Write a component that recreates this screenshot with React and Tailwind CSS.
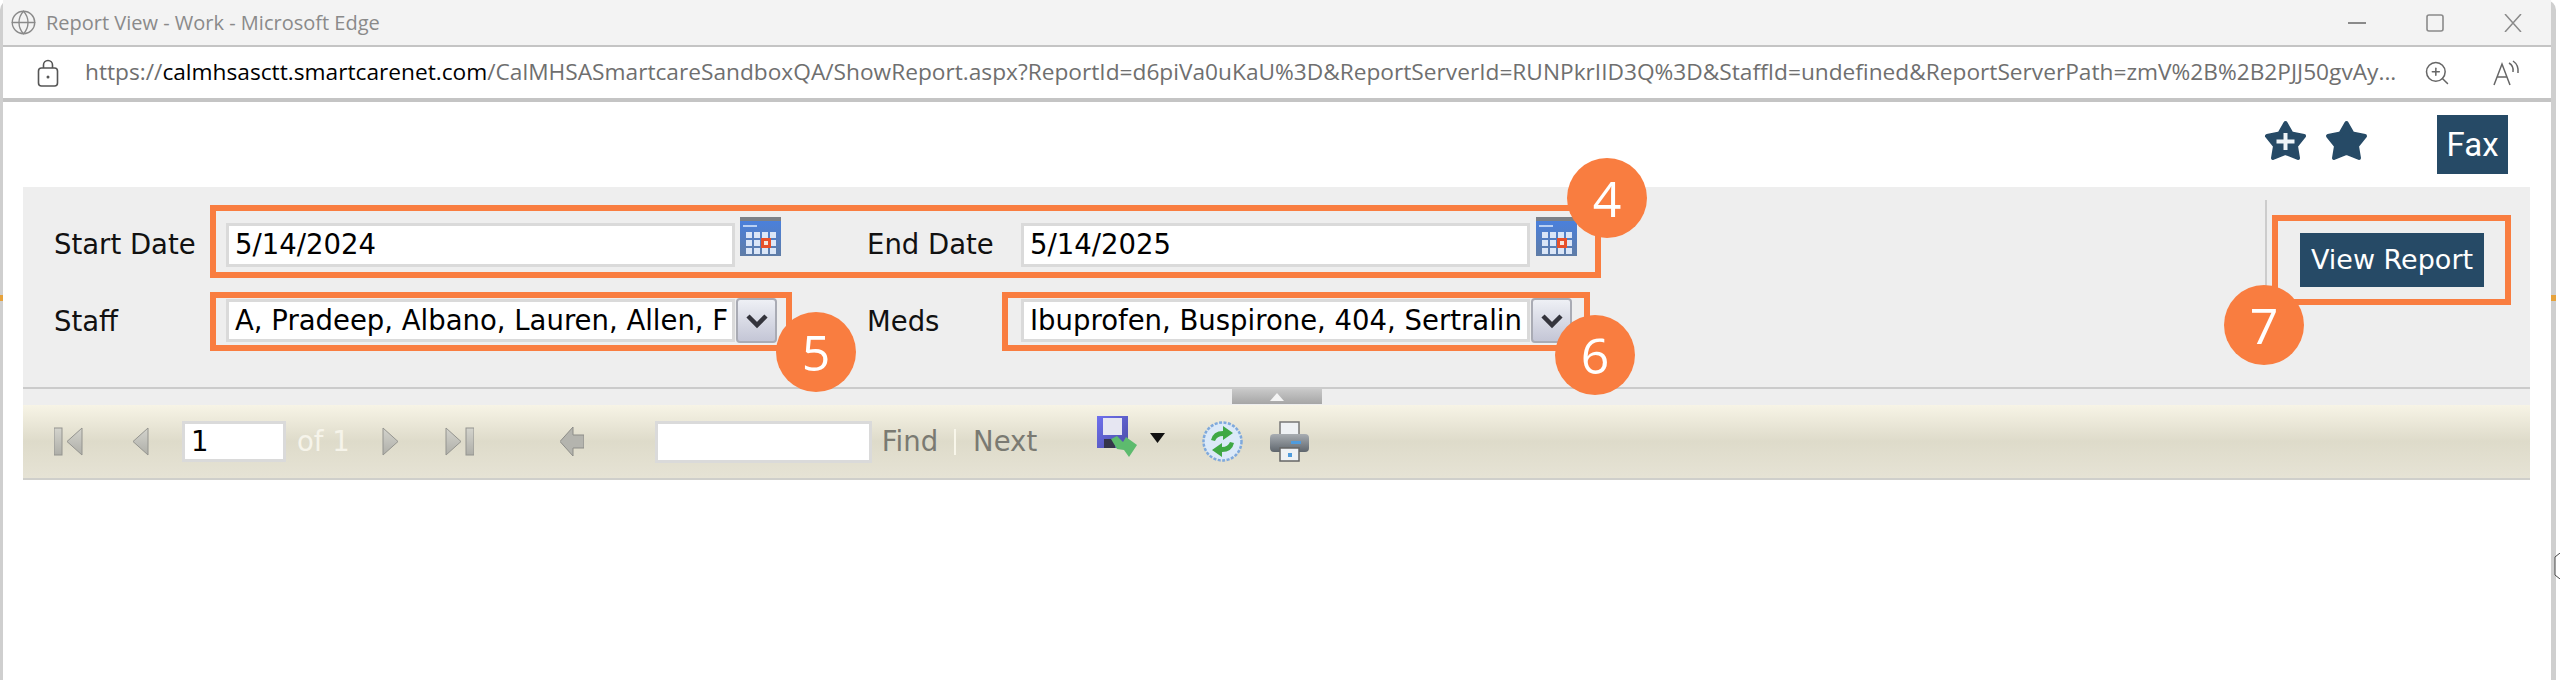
import React from 'react'
import { Globe, ZoomIn } from 'lucide-react'

const FORM_FONT = "font-['DejaVu_Sans',sans-serif]"

function StarIcon({ plus = false }) {
  return (
    <svg width="43" height="41" viewBox="0 0 43 41">
      <path
        d="M21.5 3 L27.5 13.5 L40 16 L32 26 L34 38 L21.5 33 L9 38 L11 26 L3 16 L15.5 13.5 Z"
        fill="#264a66"
        stroke="#264a66"
        strokeWidth="4"
        strokeLinejoin="round"
      />
      {plus && <path d="M21.5 13 V30 M12.5 21.5 H30.5" stroke="#eef4f8" strokeWidth="4" />}
    </svg>
  )
}

function CalendarIcon() {
  const cols = [5, 13, 21, 29]
  const rows = [15, 23, 31]
  return (
    <svg width="41" height="39" viewBox="0 0 41 39">
      <defs>
        <linearGradient id="calBody" x1="0" y1="0" x2="0" y2="1">
          <stop offset="0" stopColor="#4a80dc" />
          <stop offset="1" stopColor="#5f7ca6" />
        </linearGradient>
      </defs>
      <rect x="0" y="0" width="41" height="5" fill="#7d8187" />
      <rect x="0" y="4" width="41" height="35" fill="url(#calBody)" />
      <rect x="3" y="8" width="14" height="2" fill="#b9d0f3" />
      {rows.map((y) =>
        cols.map((x) => <rect key={`${x}-${y}`} x={x + 1} y={y} width="6" height="6" fill="#dbe6f7" />)
      )}
      <rect x="21" y="21" width="10" height="10" fill="#e8502a" />
      <rect x="24" y="24" width="4" height="4" fill="#f5e6dc" />
    </svg>
  )
}

function DropButton() {
  return (
    <div className="w-[41px] h-[45px] ml-px -my-px flex items-center justify-center rounded-[4px] border-2 border-[#a9abb4] bg-gradient-to-b from-[#eef0f5] to-[#c4c6d6]">
      <svg width="24" height="16" viewBox="0 0 24 16">
        <path d="M3 3 L12 12 L21 3" fill="none" stroke="#34343c" strokeWidth="4.5" />
      </svg>
    </div>
  )
}

function TextBox({ value, className = '' }) {
  return (
    <div className={`h-full flex items-center overflow-hidden whitespace-nowrap bg-white border-[3px] border-[#dadada] pl-[6px] text-[27.5px] text-black ${className}`}>
      {value}
    </div>
  )
}

function NavIcon({ dir, bar }) {
  // bar = the end stop on the first/last page buttons
  const w = bar ? 29 : 16
  const tri = dir === 'left'
    ? (bar ? 'M28 1 V28 L13 14.5 Z' : 'M15 1 V28 L0 14.5 Z')
    : 'M1 1 V28 L16 14.5 Z'
  const barX = dir === 'left' ? 0 : 21
  return (
    <svg width={w} height="29" viewBox={`0 0 ${w} 29`}>
      <defs>
        <linearGradient id={`nav-${dir}-${bar ? 1 : 0}`} x1="0" y1="0" x2="0" y2="1">
          <stop offset="0" stopColor="#d4d4cd" />
          <stop offset="1" stopColor="#aeaea8" />
        </linearGradient>
      </defs>
      {bar && <rect x={barX} y="1" width="8" height="27" fill={`url(#nav-${dir}-1)`} stroke="#94948f" />}
      <path d={tri} fill={`url(#nav-${dir}-${bar ? 1 : 0})`} stroke="#94948f" />
    </svg>
  )
}

function SaveIcon() {
  return (
    <svg width="41" height="41" viewBox="0 0 41 41">
      <defs>
        <linearGradient id="floppy" x1="0" y1="0" x2="1" y2="1">
          <stop offset="0" stopColor="#6f70ee" />
          <stop offset="1" stopColor="#4b4da6" />
        </linearGradient>
      </defs>
      <rect x="0" y="0" width="31" height="32" fill="url(#floppy)" />
      <rect x="6" y="2" width="19" height="17" fill="#e6e6f2" />
      <rect x="7" y="23" width="11" height="9" fill="#35354a" />
      <path d="M14 23 L20 20 L26 26 L29 21 L40 29 L32 41 L27 34 L20 33 Z" fill="#5dbb6e" />
    </svg>
  )
}

function RefreshIcon() {
  return (
    <svg width="41" height="41" viewBox="0 0 41 41">
      <ellipse cx="20.5" cy="20.5" rx="19" ry="19" fill="#dbe9f8" stroke="#7fa9dc" strokeWidth="2.5" strokeDasharray="3 1.5" />
      <path d="M9 19 Q11 10 21 10 L21 5 L31 12 L21 19 L21 15 Q15 15 13 20 Z" fill="#3fa844" />
      <path d="M32 22 Q30 31 20 31 L20 36 L10 29 L20 22 L20 26 Q26 26 28 21 Z" fill="#3fa844" />
    </svg>
  )
}

function PrintIcon() {
  return (
    <svg width="41" height="41" viewBox="0 0 41 41">
      <defs>
        <linearGradient id="printer" x1="0" y1="0" x2="0" y2="1">
          <stop offset="0" stopColor="#a8adb2" />
          <stop offset="1" stopColor="#5f666d" />
        </linearGradient>
      </defs>
      <rect x="11" y="1" width="19" height="15" fill="#eef1f4" stroke="#777" strokeWidth="1.5" />
      <rect x="1" y="13" width="39" height="18" rx="4" fill="url(#printer)" />
      <rect x="22" y="20" width="10" height="3" fill="#4f9bdc" />
      <rect x="11" y="27" width="19" height="13" fill="#eef1f4" stroke="#666" strokeWidth="1.5" />
      <rect x="19" y="32" width="4" height="4" fill="#4f9bdc" />
    </svg>
  )
}

function Callout({ n, className }) {
  return (
    <div className={`absolute w-[80px] h-[80px] rounded-full bg-[#f97d40] flex items-center justify-center text-white text-[50px] font-['Open_Sans',sans-serif] leading-none ${className}`}>
      {n}
    </div>
  )
}

export default function App() {
  return (
    <div className="relative w-[2560px] h-[680px] overflow-hidden bg-white">
      {/* browser window */}
      <div className="w-[2556px] h-[680px] flex flex-col border-l-[3px] border-r-[5px] border-[#cfcfcf] rounded-tl-[10px] rounded-tr-[10px]">
        <div className="h-[45px] shrink-0 flex items-center bg-[#f3f3f3] pl-[7px] pr-[29px] text-[#8a8a8a] font-['Open_Sans',sans-serif]">
          <Globe size={27} strokeWidth={1.2} className="text-[#8a8a8a]" />
          <span className="ml-[9px] text-[20px]">Report View - Work - Microsoft Edge</span>
          <div className="ml-auto flex items-center gap-[60px]">
            <svg width="18" height="18" viewBox="0 0 18 18"><path d="M0 9 H18" stroke="#8a8a8a" strokeWidth="2" /></svg>
            <svg width="18" height="18" viewBox="0 0 18 18"><rect x="1" y="1" width="16" height="16" rx="2" fill="none" stroke="#8a8a8a" strokeWidth="1.6" /></svg>
            <svg width="18" height="18" viewBox="0 0 18 18"><path d="M1 0 L17 18 M17 0 L1 18" stroke="#8a8a8a" strokeWidth="1.5" /></svg>
          </div>
        </div>

        <div className="h-[57px] shrink-0 flex items-center bg-white border-t-2 border-b-[4px] border-[#c4c4c4] pl-[34px] pr-[30px] font-['Open_Sans',sans-serif]">
          <svg width="22" height="28" viewBox="0 0 22 28">
            <rect x="1.5" y="9" width="19" height="18" rx="3" fill="none" stroke="#555" strokeWidth="1.6" />
            <path d="M6.5 9 V6 a4.5 4.5 0 0 1 9 0 V9" fill="none" stroke="#555" strokeWidth="1.6" />
            <circle cx="11" cy="18" r="1.5" fill="#555" />
          </svg>
          <div className="ml-[26px] w-[2320px] whitespace-nowrap overflow-hidden text-[22.7px] text-[#6f6f6f]">
            https://<span className="text-black">calmhsasctt.smartcarenet.com</span>/CalMHSASmartcareSandboxQA/ShowReport.aspx?ReportId=d6piVa0uKaU%3D&amp;ReportServerId=RUNPkrIID3Q%3D&amp;StaffId=undefined&amp;ReportServerPath=zmV%2B%2B2PJJ50gvAy...
          </div>
          <div className="ml-auto flex items-center gap-[42px]">
            <ZoomIn size={28} strokeWidth={1.3} className="text-[#666]" />
            <svg width="28" height="26" viewBox="0 0 28 26" fill="none" stroke="#666" strokeWidth="1.5">
              <path d="M1 25 L9 4 L17 25 M4 17 H14" />
              <path d="M16 3 Q21 6 20 12 M20 1 Q26 5 25 13" />
            </svg>
          </div>
        </div>

        <div className={`flex-1 flex flex-col bg-white pl-[20px] pr-[21px] ${FORM_FONT}`}>
          {/* favourites and fax */}
          <div className="h-[85px] shrink-0 flex items-start justify-end pr-[22px]">
            <div className="mt-[18px] flex gap-[18px] mr-[69px]">
              <StarIcon plus />
              <StarIcon />
            </div>
            <div className="mt-[13px] w-[71px] h-[59px] flex items-center justify-center bg-[#264a66] text-white text-[33px] font-['Roboto',sans-serif]">
              Fax
            </div>
          </div>

          {/* report parameters */}
          <div className="h-[202px] shrink-0 flex bg-[#eeeeee] border-b-2 border-[#cbcbcb] text-[27.5px] text-[#111]">
            <div className="pl-[31px] pt-[36px] flex flex-col gap-[32px]">
              <div className="h-[44px] flex items-center">
                <span className="w-[172px]">Start Date</span>
                <TextBox value="5/14/2024" className="w-[509px]" />
                <div className="ml-[5px] -mt-[17px]"><CalendarIcon /></div>
                <span className="ml-[86px] w-[154px]">End Date</span>
                <TextBox value="5/14/2025" className="w-[509px]" />
                <div className="ml-[6px] -mt-[17px]"><CalendarIcon /></div>
              </div>
              <div className="h-[43px] flex items-center">
                <span className="w-[172px] pt-[3px]">Staff</span>
                <TextBox value="A, Pradeep, Albano, Lauren, Allen, F" className="w-[509px]" />
                <DropButton />
                <span className="ml-[90px] w-[154px] pt-[3px]">Meds</span>
                <TextBox value="Ibuprofen, Buspirone, 404, Sertralin" className="w-[509px]" />
                <DropButton />
              </div>
            </div>
            <div className="ml-auto mt-[13px] w-[265px] h-[120px] border-l-2 border-[#cccccc] pl-[33px] pt-[33px]">
              <div className="w-[184px] h-[54px] flex items-center justify-center bg-[#264a66] text-white text-[27px]">
                View Report
              </div>
            </div>
          </div>

          {/* collapse handle */}
          <div className="h-[16px] shrink-0 bg-[#eeeeee] flex justify-center">
            <div className="w-[90px] h-[15px] flex items-center justify-center bg-gradient-to-b from-[#c9c9c9] to-[#a6a6a6]">
              <svg width="14" height="8" viewBox="0 0 14 8"><path d="M7 0 L14 8 H0 Z" fill="#f4f4f4" /></svg>
            </div>
          </div>

          {/* report viewer toolbar */}
          <div className="h-[75px] shrink-0 flex items-center pl-[31px] text-[27.5px] bg-gradient-to-b from-[#f7f4e6] via-[#dedbca] to-[#e6e3d5] border-b-2 border-[#cfcfcb]">
            <NavIcon dir="left" bar />
            <div className="ml-[50px]"><NavIcon dir="left" /></div>
            <div className="ml-[33px] w-[104px] h-[41px]"><TextBox value="1" /></div>
            <span className="ml-[11px] text-[#f6f4ea]">of 1</span>
            <div className="ml-[32px]"><NavIcon dir="right" /></div>
            <div className="ml-[47px]"><NavIcon dir="right" bar /></div>
            <svg className="ml-[86px]" width="24" height="29" viewBox="0 0 24 29">
              <path d="M0 14.5 L13 0 V8 H24 V21 H13 V29 Z" fill="#b4b4ae" stroke="#8d8d88" />
            </svg>
            <div className="ml-[71px] w-[217px] h-[42px]"><TextBox value="" /></div>
            <span className="ml-[10px] text-[#7a7a72]">Find</span>
            <span className="ml-[16px] w-[2px] h-[26px] bg-[#f8f6ea]" />
            <span className="ml-[17px] text-[#7a7a72]">Next</span>
            <div className="ml-[60px] -mt-[10px]"><SaveIcon /></div>
            <svg className="ml-[12px] -mt-[8px]" width="15" height="10" viewBox="0 0 15 10"><path d="M0 0 H15 L7.5 10 Z" fill="#111" /></svg>
            <div className="ml-[37px]"><RefreshIcon /></div>
            <div className="ml-[26px]"><PrintIcon /></div>
          </div>
        </div>
      </div>

      {/* annotation boxes */}
      <div className="absolute left-[210px] top-[205px] w-[1391px] h-[73px] border-[6px] border-[#f97d40]" />
      <div className="absolute left-[210px] top-[292px] w-[582px] h-[59px] border-[6px] border-[#f97d40]" />
      <div className="absolute left-[1002px] top-[292px] w-[588px] h-[59px] border-[6px] border-[#f97d40]" />
      <div className="absolute left-[2272px] top-[215px] w-[239px] h-[90px] border-[6px] border-[#f97d40]" />
      <Callout n="4" className="left-[1567px] top-[158px]" />
      <Callout n="5" className="left-[776px] top-[312px]" />
      <Callout n="6" className="left-[1555px] top-[315px]" />
      <Callout n="7" className="left-[2224px] top-[285px]" />

      {/* window edge marks */}
      <div className="absolute left-0 top-[295px] w-[3px] h-[6px] bg-[#e6a23c]" />
      <div className="absolute left-[2551px] top-[295px] w-[5px] h-[6px] bg-[#e6a23c]" />
      <svg className="absolute left-[2554px] top-[553px]" width="6" height="26" viewBox="0 0 6 26">
        <path d="M6 0 L1 4 V22 L6 26" fill="#fff" stroke="#444" strokeWidth="1" />
      </svg>
    </div>
  )
}
